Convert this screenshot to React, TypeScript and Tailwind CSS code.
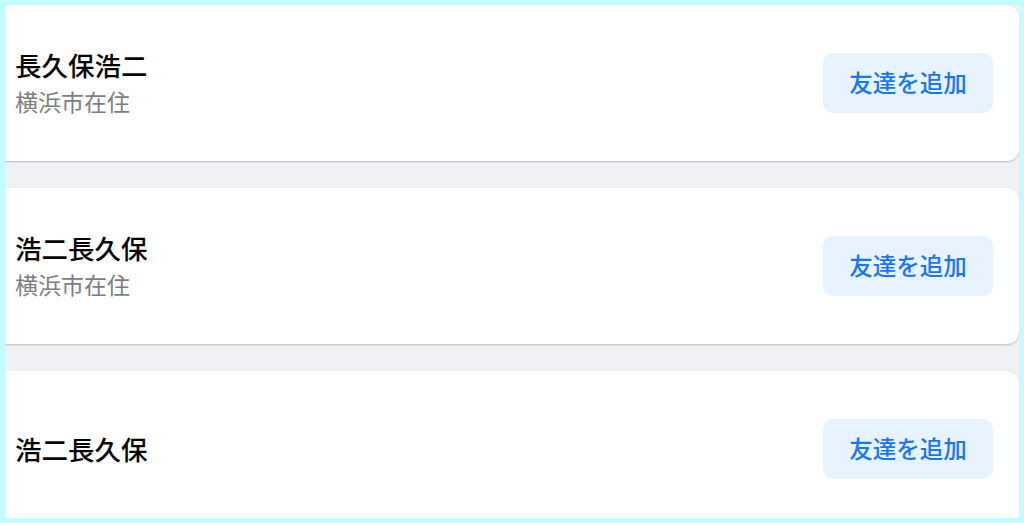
const friends = [
  { name: '長久保浩二', place: '横浜市在住' },
  { name: '浩二長久保', place: '横浜市在住' },
  { name: '浩二長久保' },
]

type Friend = { name: string; place?: string }

const FriendCard = ({ friend }: { friend: Friend }) => (
  <div className="flex h-[156px] shrink-0 items-center justify-between rounded-r-xl bg-white pl-[10px] pr-[26px] shadow-[0_1px_2px_rgba(0,0,0,0.22)]">
    <div className="flex flex-col">
      <span className="text-[26.5px] leading-[36px] font-medium text-[#050505]">
        {friend.name}
      </span>
      {friend.place && (
        <span className="text-[23px] leading-[36px] text-[#7c7e82]">
          {friend.place}
        </span>
      )}
    </div>
    <button
      type="button"
      className="flex h-[60px] w-[170px] items-center justify-center rounded-[10px] bg-[#e7f3ff] text-[23.5px] font-medium text-[#1877f2]"
    >
      友達を追加
    </button>
  </div>
)

export default function App() {
  return (
    <div
      className="h-[523px] w-[1024px] bg-[#c2fcfe] p-[5px]"
      style={{ fontFamily: '"Noto Sans CJK JP", "Noto Sans", sans-serif' }}
    >
      <div className="flex h-full flex-col gap-[27px] overflow-hidden bg-[#f0f1f4]">
        {friends.map((f, i) => (
          <FriendCard key={i} friend={f} />
        ))}
      </div>
    </div>
  )
}
